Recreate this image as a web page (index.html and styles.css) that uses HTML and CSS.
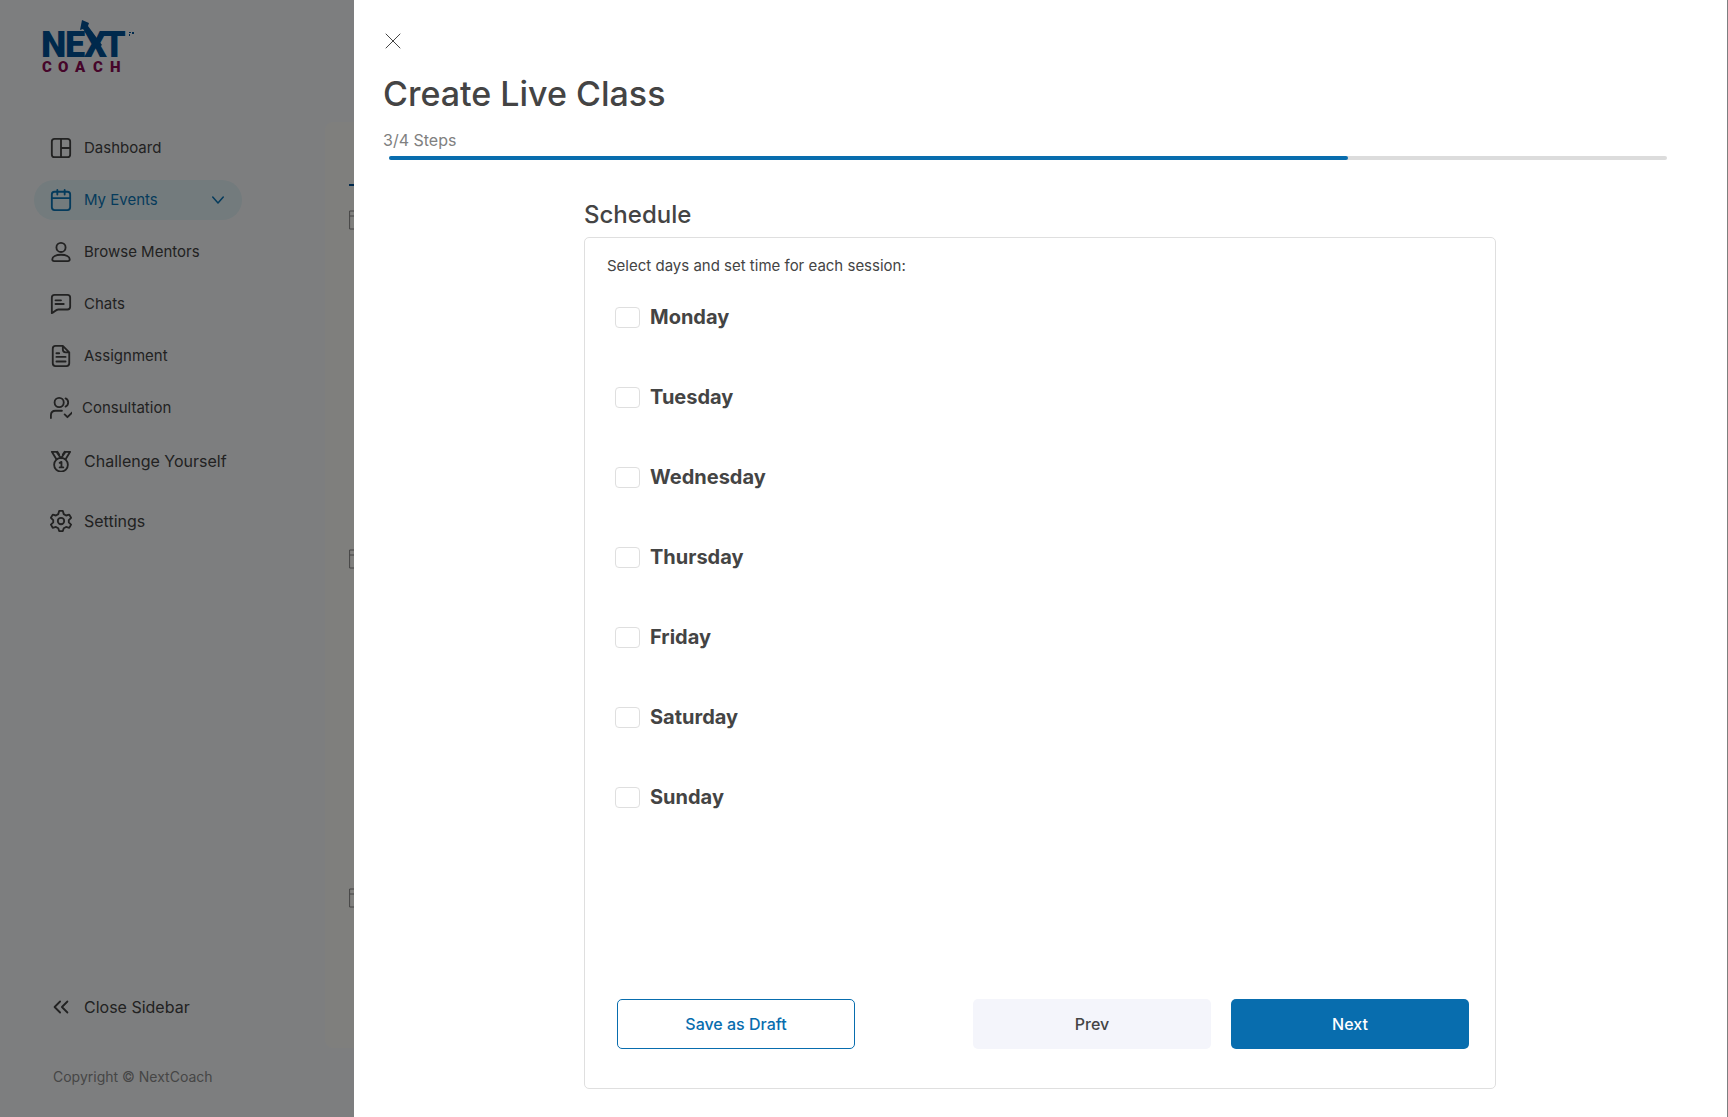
FILE: index.html
```html
<!DOCTYPE html>
<html lang="en">
<head>
<meta charset="utf-8">
<meta name="viewport" content="width=device-width, initial-scale=1">
<title>Create Live Class</title>
<link rel="stylesheet" href="styles.css">
</head>
<body>
<div class="app">
  <aside class="sidebar">
    <a class="brand" href="#" aria-label="Next Coach">
      <svg class="logo" width="96" height="60" viewBox="0 0 96 60">
        <g class="logo-next">
          <text x="-1 23 42 61" y="37">NEXT</text>
          <path d="M40 0l7 3-1 3 14 19-5 4-14-20-3 1z"/>
          <path d="M87 12h2v1h-2zM90 12h2v2h-2zM87 14h1v2h-1z"/>
        </g>
        <text class="logo-coach" x="0 16 33 51 68" y="52">COACH</text>
      </svg>
    </a>
    <nav class="nav">
      <a class="nav-item" href="#">
        <svg class="icon" viewBox="0 0 24 24"><rect x="2" y="2" width="20" height="20" rx="3"/><path d="M12 2v20M12 12h10"/></svg>
        Dashboard
      </a>
      <a class="nav-item active" href="#">
        <svg class="icon" viewBox="0 0 24 24"><rect x="2" y="3" width="20" height="20" rx="3"/><path d="M2 10h20M8 1v5M16 1v5"/></svg>
        My Events
        <svg class="chevron" width="12" height="12" viewBox="0 0 16 16"><path d="m1 4 7 8 7-8"/></svg>
      </a>
      <a class="nav-item" href="#">
        <svg class="icon" viewBox="0 0 24 24"><circle cx="12" cy="7" r="5"/><path d="M2.500 20c0-3 4-5 9.500-5s9.500 2 9.500 5c0 1.500-1 2-2 2h-15c-1 0-2-.5-2-2z"/></svg>
        Browse Mentors
      </a>
      <a class="nav-item" href="#">
        <svg class="icon" viewBox="0 0 24 24"><path d="M2 22V5a3 3 0 0 1 3-3h14a3 3 0 0 1 3 3v10a3 3 0 0 1-3 3H9c-3 0-4 3-7 4zM6 8h6M6 12h9"/></svg>
        Chats
      </a>
      <a class="nav-item" href="#">
        <svg class="icon" viewBox="0 0 24 24"><path d="M14 1H6a3 3 0 0 0-3 3v16a3 3 0 0 0 3 3h12a3 3 0 0 0 3-3V8zM14 1v4a3 3 0 0 0 3 3h4M7 9h3M7 13h10M7 18h10"/></svg>
        Assignment
      </a>
      <a class="nav-item wide" href="#">
        <svg class="icon" viewBox="0 0 24 24"><circle cx="10" cy="6" r="5"/><path d="M17 1.500a5 5 0 0 1 0 9M1 23v-3c0-3 2-5 5-5h7M16 19l3 3 5-5"/></svg>
        Consultation
      </a>
    </nav>
    <nav class="nav nav-secondary">
      <a class="nav-item" href="#">
        <svg class="icon" viewBox="0 0 24 24"><circle cx="12" cy="16" r="7.500"/><path d="M7 10 2 2h5l5 7 5-7h5l-5 8M8 2l2 3M16 2l-2 3M10.500 14l2-1v6M10.500 19h4"/></svg>
        Challenge Yourself
      </a>
      <a class="nav-item" href="#">
        <svg class="icon" viewBox="0 0 24 24"><circle cx="12" cy="12" r="3.500"/><path d="M10 1h4l1 3.500 2.500 1.500 3.500-1 2 3.500L20.500 11v2.500l2.500 2.500-2 3.500-3.500-1L15 20l-1 3h-4l-1-3-2.500-1.500-3.500 1-2-3.500L3.500 13.500V11L1 8.500 3 5l3.500 1L9 4.500z"/></svg>
        Settings
      </a>
    </nav>
    <div class="sidebar-foot">
      <button class="nav-item close-sidebar" type="button">
        <svg class="icon" viewBox="0 0 24 24"><path d="m11 6-6 6 6 6M19 6l-6 6 6 6"/></svg>
        Close Sidebar
      </button>
      <p class="copyright">Copyright © NextCoach</p>
    </div>
  </aside>
  <main class="events">
    <div class="tab-line"></div>
    <div class="event-list">
      <div class="event"><svg class="event-icon" viewBox="0 0 20 20"><path d="M1 1h18v18H1zM1 6h18"/></svg></div>
      <div class="event"><svg class="event-icon" viewBox="0 0 20 20"><path d="M1 1h18v18H1zM1 6h18"/></svg></div>
      <div class="event"><svg class="event-icon" viewBox="0 0 20 20"><path d="M1 1h18v18H1zM1 6h18"/></svg></div>
    </div>
  </main>

  <div class="backdrop">
    <section class="drawer" role="dialog" aria-labelledby="drawer-title">
      <button class="close" type="button" aria-label="Close">
        <svg width="16" height="16" viewBox="0 0 16 16"><path d="m1 1 14 14M15 1 1 15"/></svg>
      </button>
      <h1 class="title" id="drawer-title">Create Live Class</h1>
      <p class="steps">3/4 Steps</p>
      <div class="progress"><div class="progress-fill" style="width:75%"></div></div>

      <form class="schedule">
        <h2 class="schedule-title">Schedule</h2>
        <div class="card">
          <p class="hint">Select days and set time for each session:</p>
          <div class="days">
            <label class="day"><input class="check" type="checkbox">Monday</label>
            <label class="day"><input class="check" type="checkbox">Tuesday</label>
            <label class="day"><input class="check" type="checkbox">Wednesday</label>
            <label class="day"><input class="check" type="checkbox">Thursday</label>
            <label class="day"><input class="check" type="checkbox">Friday</label>
            <label class="day"><input class="check" type="checkbox">Saturday</label>
            <label class="day"><input class="check" type="checkbox">Sunday</label>
          </div>
          <div class="actions">
            <button class="btn btn-outline" type="button">Save as Draft</button>
            <button class="btn btn-light" type="button">Prev</button>
            <button class="btn btn-primary" type="button">Next</button>
          </div>
        </div>
      </form>
    </section>
  </div>
</div>
</body>
</html>
```
FILE: styles.css
```css
* {
  box-sizing: border-box;
}

body {
  margin: 0;
  font-family: Inter, "Liberation Sans", sans-serif;
  font-size: 16px;
  line-height: 24px;
  color: #444;
}

h1,
h2,
p {
  margin: 0;
}

button {
  font: inherit;
  color: inherit;
  cursor: pointer;
}

svg {
  flex: none;
  fill: none;
  stroke: currentColor;
  stroke-linecap: round;
  stroke-linejoin: round;
}

.app {
  position: relative;
  display: flex;
  min-height: 100vh;
  background: #fbfdff;
}

/* Sidebar */
.sidebar {
  display: flex;
  flex-direction: column;
  flex: none;
  width: 325px;
  padding: 20px 83px 28px 34px;
  font-size: 15px;
  color: #444;
}

.brand {
  display: block;
  height: 60px;
  padding-left: 8px;
  margin-bottom: 48px;
}

.logo {
  display: block;
  stroke: none;
}

.logo-next {
  fill: #005299;
  font: 900 36px Roboto, sans-serif;
}

.logo-coach {
  fill: #8c0a54;
  font: 900 15px Roboto, sans-serif;
}

.nav {
  display: flex;
  flex-direction: column;
  gap: 12px;
}

.nav-secondary {
  gap: 20px;
  margin-top: 13px;
  font-size: 16px;
}

.nav-item {
  display: flex;
  align-items: center;
  gap: 12px;
  height: 40px;
  padding: 0 18px 0 16px;
  border: 0;
  border-radius: 20px;
  background: none;
  color: inherit;
  text-decoration: none;
  white-space: nowrap;
}

.icon {
  width: 22px;
  height: 22px;
  stroke-width: 2;
}

.wide {
  gap: 10px;
}

.active {
  background: #e6f6fa;
  color: #0a76b8;
}

.chevron {
  margin-left: auto;
  stroke-width: 2;
}

.sidebar-foot {
  display: flex;
  flex-direction: column;
  gap: 38px;
  margin-top: auto;
}

.close-sidebar {
  font-size: 16px;
}

.copyright {
  padding-left: 19px;
  font-size: 14px;
  color: #8c8c8c;
}

/* Events list under the drawer */
.events {
  flex: 1;
  margin: 122px 0 69px;
  padding: 62px 24px 0;
  border-radius: 8px;
  background: #fffefb;
}

.tab-line {
  width: 120px;
  height: 2px;
  margin-bottom: 24px;
  background: #005299;
}

.event-list {
  display: flex;
  flex-direction: column;
  gap: 319px;
}

.event {
  height: 20px;
  color: #888;
}

.event-icon {
  display: block;
  width: 20px;
  height: 20px;
  stroke-width: 1;
}

/* Drawer */
.backdrop {
  position: absolute;
  inset: 0;
  display: flex;
  padding: 0 1px 0 354px;
  background: rgba(0, 0, 0, 0.5);
}

.drawer {
  flex: 1;
  padding: 33px 30px 28px 29px;
  background: #fff;
}

.close {
  display: block;
  width: 20px;
  height: 16px;
  padding: 0 2px;
  border: 0;
  background: none;
}

.close svg {
  display: block;
}

.title {
  margin-top: 23px;
  font-size: 34px;
  font-weight: 500;
  line-height: 44px;
}

.steps {
  margin-top: 12px;
  color: #808080;
}

.progress {
  height: 4px;
  margin: 4px 30px 0 6px;
  border-radius: 2px;
  background: #dcdcdc;
}

.progress-fill {
  height: 4px;
  border-radius: 2px;
  background: #086dae;
}

.schedule {
  width: 100%;
  max-width: 912px;
  margin: 39px auto 0;
}

.schedule-title {
  font-size: 24px;
  font-weight: 500;
  line-height: 32px;
}

.card {
  margin-top: 6px;
  padding: 16px 26px 39px 22px;
  border: 1px solid #dfdfdf;
  border-radius: 5px;
}

.hint {
  font-size: 15px;
}

.days {
  display: flex;
  flex-direction: column;
  gap: 56px;
  padding: 27px 8px 0;
}

.day {
  display: flex;
  align-items: center;
  gap: 10px;
  align-self: flex-start;
  font-size: 20px;
  font-weight: 700;
}

.check {
  appearance: none;
  width: 25px;
  height: 21px;
  margin: 0;
  border: 1px solid #dfdfdf;
  border-radius: 4px;
  background: #fff;
}

.actions {
  display: flex;
  gap: 20px;
  margin-top: 190px;
  padding-left: 10px;
}

.btn {
  flex: 0 1 238px;
  height: 50px;
  border: 0;
  border-radius: 5px;
  font-weight: 500;
}

.btn-outline {
  margin-right: auto;
  border: 1px solid #086dae;
  background: #fff;
  color: #086dae;
}

.btn-light {
  background: #f4f5fb;
}

.btn-primary {
  background: #086dae;
  color: #fff;
}
```
